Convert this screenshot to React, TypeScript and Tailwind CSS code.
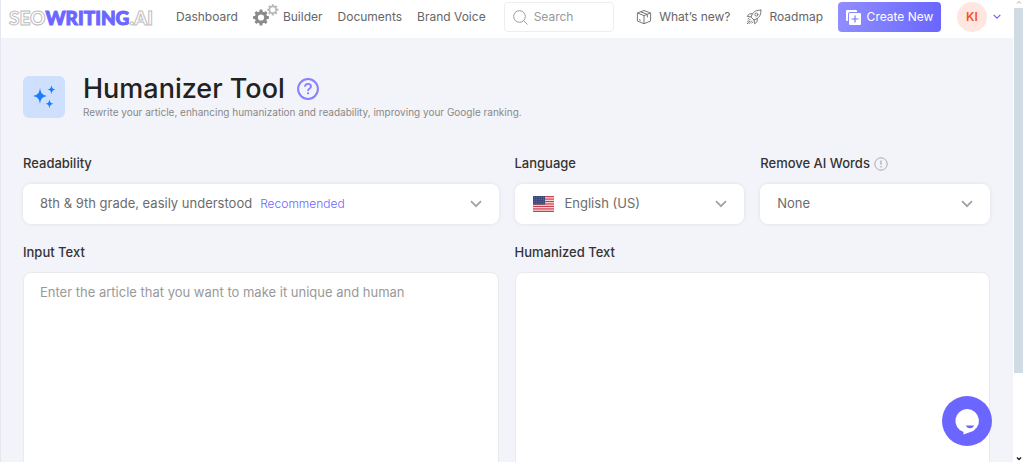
import type { ReactNode } from "react";

function Chevron({ className }: { className: string }) {
  return (
    <svg viewBox="0 0 12 8" className={className} fill="none" stroke="currentColor" strokeWidth="1.8" aria-hidden="true">
      <path d="M1 1.2 6 6.2 11 1.2" />
    </svg>
  );
}

function gearPath(cx: number, cy: number, outer: number, inner: number, teeth: number) {
  const points: string[] = [];
  const step = (Math.PI * 2) / teeth;
  for (let i = 0; i < teeth; i++) {
    const a = i * step;
    const corners: [number, number][] = [
      [inner, -0.32],
      [outer, -0.22],
      [outer, 0.22],
      [inner, 0.32],
    ];
    for (const [r, f] of corners) {
      points.push(`${(cx + r * Math.cos(a + f * step)).toFixed(2)} ${(cy + r * Math.sin(a + f * step)).toFixed(2)}`);
    }
  }
  return `M${points.join("L")}Z`;
}

function ring(cx: number, cy: number, r: number) {
  return `M${cx - r} ${cy}a${r} ${r} 0 1 0 ${2 * r} 0a${r} ${r} 0 1 0 ${-2 * r} 0Z`;
}

function Gears() {
  return (
    <svg viewBox="0 0 26 22" className="mb-1 h-[22px] w-[26px]" fillRule="evenodd" aria-hidden="true">
      <path d={gearPath(8, 13.5, 8, 6.2, 8) + ring(8, 13.5, 3.1)} fill="#8a8a8a" />
      <path d={gearPath(19.8, 5.8, 5.7, 4.3, 8) + ring(19.8, 5.8, 2.5)} fill="#b9b9b9" />
    </svg>
  );
}

function BoxIcon() {
  return (
    <svg viewBox="0 0 16 16" className="size-4" fill="none" stroke="#777" strokeWidth="1" strokeLinejoin="round" aria-hidden="true">
      <path d="M8 1.500 14.600 4v8L8 14.700 1.400 12V4ZM1.400 4 8 6.600 14.600 4M8 6.600v8.100M4.700 2.800l6.600 2.600v3M3 10.700l1.800.7" />
    </svg>
  );
}

function RocketIcon() {
  return (
    <svg viewBox="0 0 16 16" className="size-4" fill="none" stroke="#777" strokeWidth="1" strokeLinecap="round" strokeLinejoin="round" aria-hidden="true">
      <path d="M14.8 1.2c-4-.3-6.6.8-8.700 4.300L5 8l3 3 2.500-1.100c3.500-2.100 4.600-4.700 4.300-8.700ZM6.600 4.800 3.300 4.900 1.200 7.300 5 8M11.200 9.400l-.1 3.300-2.400 2.100L8 11" />
      <circle cx="10.400" cy="5.600" r="1.500" />
      <path d="M4.200 10.200 1.200 13.200M5.800 11.800 3 14.700M3.600 12.400 1.300 14.700M2.900 9.300l-1 1M6.700 13.100l-1 1" strokeDasharray="1.500 1" />
    </svg>
  );
}

function CopyPlusIcon() {
  return (
    <svg viewBox="0 0 15 15" className="size-[15px]" aria-hidden="true">
      <path d="M1 0h9a1 1 0 0 1 1 1v1H4a2 2 0 0 0-2 2v7H1a1 1 0 0 1-1-1V1a1 1 0 0 1 1-1Z" fill="#fff" />
      <rect x="3" y="3" width="12" height="12" rx="1" fill="#fff" />
      <path d="M9 5.500v7M5.500 9h7" stroke="#7a77fb" strokeWidth="1.200" />
    </svg>
  );
}

function Sparkles() {
  return (
    <svg viewBox="0 0 42 42" className="size-[42px]" fill="#1a7dff" aria-hidden="true">
      <path d="M17 12c1 5.600 2 6.700 7 8-5 1.300-6 2.400-7 8-1-5.600-2-6.700-7-8 5-1.300 6-2.400 7-8Z" />
      <path d="M28.500 9c.6 3.200 1.200 3.900 4 4.600-2.800.7-3.400 1.400-4 4.600-.6-3.200-1.200-3.900-4-4.600 2.800-.7 3.400-1.400 4-4.600Z" />
      <path d="M26.500 23.200c.6 3.200 1.200 3.900 4 4.600-2.800.7-3.400 1.400-4 4.600-.6-3.200-1.200-3.900-4-4.600 2.800-.7 3.400-1.400 4-4.600Z" />
    </svg>
  );
}

function UsFlag() {
  return (
    <svg viewBox="0 0 21 16" className="h-4 w-[21px] shrink-0" aria-hidden="true">
      <rect width="21" height="16" fill="#f6dfe1" />
      {[0, 1, 2, 3, 4, 5, 6].map((i) => (
        <rect key={i} y={i * 2.46} width="21" height="1.23" fill="#cf3f4c" />
      ))}
      <rect width="12" height="8.600" fill="#3c4a7c" />
      {[1.500, 3.400, 5.300, 7.200].map((y) =>
        [1.500, 3.800, 6.100, 8.400, 10.600].map((x) => <circle key={`${x}-${y}`} cx={x} cy={y} r="0.4" fill="#8f9abf" />)
      )}
    </svg>
  );
}

function Field({ id, label, extra, children }: { id: string; label: string; extra?: ReactNode; children: ReactNode }) {
  return (
    <div>
      <div className="flex h-5 items-center gap-1">
        <label htmlFor={id} className="text-[13px] font-medium text-[#333]">
          {label}
        </label>
        {extra}
      </div>
      <div className="mt-2.5 flex h-10 items-center rounded-lg bg-white px-[17px] shadow-[0_0_4px_rgba(0,0,0,0.08)]">
        {children}
        <Chevron className="ml-auto w-3 shrink-0 text-[#a3a3a3]" />
      </div>
    </div>
  );
}

const selectClass = "appearance-none bg-transparent text-[13px] text-[#6c6c6c] outline-none [field-sizing:content]";
const areaClass =
  "mt-2.5 block h-[420px] w-full resize-none rounded-lg border border-[#e9e9ee] bg-white px-4 py-2.5 text-[13px] text-[#555] outline-none placeholder:text-[#999]";

export default function App() {
  return (
    <div className="flex h-screen overflow-hidden border-l border-[#e4e8f0] bg-[#f3f4f9] font-['Inter',sans-serif]">
      <div className="flex min-w-0 flex-1 flex-col">
        <header className="flex h-[38px] shrink-0 items-center bg-white pr-3 pb-1 pl-2 text-xs text-[#666]">
          <a
            href="#home"
            className="flex w-[148px] shrink-0 items-center font-['Lato',sans-serif] text-[19px] leading-none font-black"
          >
            <span className="text-white [-webkit-text-stroke:1px_#bdbdbd]">SEO</span>
            <span className="text-[#6b66ff] [-webkit-text-stroke:1px_#6b66ff]">WRITING</span>
            <span className="text-white [-webkit-text-stroke:1px_#bdbdbd]">.AI</span>
          </a>
          <nav className="ml-[19px] flex shrink-0 items-center gap-[15px]">
            <a href="#dashboard">Dashboard</a>
            <a href="#builder" className="flex items-center gap-1">
              <Gears />
              Builder
            </a>
            <a href="#documents">Documents</a>
            <a href="#voice">Brand Voice</a>
          </nav>
          <label className="ml-[18px] flex h-[30px] w-[110px] items-center gap-1.5 rounded border border-[#eee] pl-2">
            <svg viewBox="0 0 15 15" className="size-[15px] shrink-0" fill="none" stroke="#999" strokeWidth="1" aria-hidden="true">
              <circle cx="6.500" cy="6.500" r="5.800" />
              <path d="m10.700 10.700 3.800 3.800" />
            </svg>
            <input type="search" aria-label="Search" placeholder="Search" className="w-full min-w-0 bg-transparent outline-none placeholder:text-[#999]" />
          </label>
          <div className="ml-auto flex shrink-0 items-center">
            <a href="#news" className="flex items-center gap-[7px]">
              <BoxIcon />
              What’s new?
            </a>
            <a href="#roadmap" className="ml-4 flex items-center gap-[7px]">
              <RocketIcon />
              Roadmap
            </a>
            <button className="ml-[15px] flex h-[30px] w-[103px] items-center justify-center gap-1.5 rounded bg-linear-to-r from-[#918dff] to-[#6a66ff] text-white">
              <CopyPlusIcon />
              Create New
            </button>
            <button className="ml-4 flex items-center gap-1.5" aria-label="Account">
              <span className="flex size-[30px] items-center justify-center rounded-full bg-[#ffe7e0] font-semibold text-[#f4512c]">KI</span>
              <Chevron className="w-2 text-[#6b66ff]" />
            </button>
          </div>
        </header>

        <main className="min-h-0 flex-1 overflow-hidden pt-[34px] pr-[23px] pl-[22px]">
          <div className="flex items-center gap-[18px]">
            <span className="mt-1 rounded-md bg-[#cfe0ff]">
              <Sparkles />
            </span>
            <div>
              <h1 className="flex items-center gap-3 text-[27px] leading-8 font-medium text-[#222]">
                Humanizer Tool
                <button aria-label="Help" className="mt-px">
                  <svg viewBox="0 0 22 22" className="size-[22px]" fill="none" stroke="#8580ff" strokeWidth="2" aria-hidden="true">
                    <circle cx="11" cy="11" r="9.900" />
                    <path d="M8 8.800c0-1.800 1.300-2.900 3-2.900s3 1.100 3 2.700c0 2-3 2-3 4.300M11 14.300v2" strokeWidth="1.800" />
                  </svg>
                </button>
              </h1>
              <p className="mt-px text-[10px] leading-3 text-[#888]">
                Rewrite your article, enhancing humanization and readability, improving your Google ranking.
              </p>
            </div>
          </div>

          <div className="mt-9 grid grid-cols-2 gap-4">
            <Field id="readability" label="Readability">
              <select id="readability" className={selectClass}>
                <option>8th &amp; 9th grade, easily understood</option>
              </select>
              <span className="ml-2 text-xs font-light text-[#6b66ff]">Recommended</span>
            </Field>
            <div className="grid grid-cols-2 gap-4">
              <Field id="language" label="Language">
                <span className="mr-[11px] ml-px">
                  <UsFlag />
                </span>
                <select id="language" className={selectClass}>
                  <option>English (US)</option>
                </select>
              </Field>
              <Field
                id="words"
                label="Remove AI Words"
                extra={
                  <svg viewBox="0 0 14 14" className="size-3.5" fill="none" stroke="#aaa" aria-hidden="true">
                    <circle cx="7" cy="7" r="6.200" />
                    <path d="M7 3.500v4.300M7 9v1.400" strokeWidth="1.200" />
                  </svg>
                }
              >
                <select id="words" className={selectClass}>
                  <option>None</option>
                </select>
              </Field>
            </div>
          </div>

          <div className="mt-[18px] grid grid-cols-2 gap-4">
            <div>
              <label htmlFor="source" className="block h-5 text-[13px] leading-5 font-medium text-[#333]">
                Input Text
              </label>
              <textarea id="source" className={areaClass} placeholder="Enter the article that you want to make it unique and human" />
            </div>
            <div>
              <label htmlFor="result" className="block h-5 text-[13px] leading-5 font-medium text-[#333]">
                Humanized Text
              </label>
              <textarea id="result" className={areaClass} />
            </div>
          </div>
        </main>
      </div>

      <div className="flex w-[11px] shrink-0 flex-col items-center bg-white" aria-hidden="true">
        <svg viewBox="0 0 6 8" className="h-2 w-1.5" fill="none" stroke="#aaa">
          <path d="M1 3.500 3 1.500l2 2" />
        </svg>
        <div className="h-[79%] w-[9px] bg-[#d0dbe3]" />
        <svg viewBox="0 0 6 6" className="mt-auto size-1.5" fill="none" stroke="#222" strokeWidth="1.500">
          <path d="M1 1.500 3 3.500l2-2" />
        </svg>
      </div>

      <button aria-label="Open chat" className="fixed right-8 bottom-4 flex size-[50px] items-center justify-center rounded-full bg-[#6b66ff]">
        <svg viewBox="0 0 50 50" className="size-[50px]" aria-hidden="true">
          <path d="M25 13a11.800 11.800 0 0 1 2.800 23.300L21.500 38.500V36A11.800 11.800 0 0 1 25 13Z" fill="#fff" />
          <path d="M23.800 29.600h8.400c-1 2.200-2.600 2.700-4.200 2.700s-3.200-.5-4.200-2.700Z" fill="#6b66ff" />
        </svg>
      </button>
    </div>
  );
}
